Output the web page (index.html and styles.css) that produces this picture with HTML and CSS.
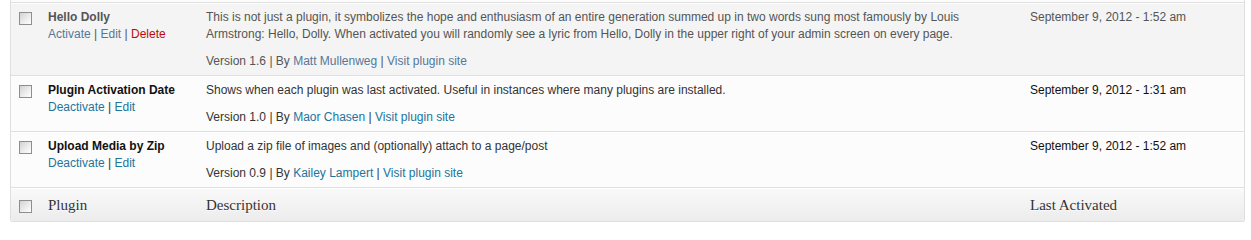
FILE: index.html
```html
<!DOCTYPE html>
<html>
<head>
<meta charset="utf-8">
<link rel="stylesheet" href="styles.css">
</head>
<body>
<div class="plugins">
  <div class="prev"></div>

  <div class="row inactive">
    <div class="cell check"><span class="cb"></span></div>
    <div class="cell name">
      <strong class="title">Hello Dolly</strong>
      <div class="actions"><a href="#">Activate</a> | <a href="#">Edit</a> | <a href="#" class="delete">Delete</a></div>
    </div>
    <div class="cell desc">
      <p class="text">This is not just a plugin, it symbolizes the hope and enthusiasm of an entire generation summed up in two words sung most famously by Louis Armstrong: Hello, Dolly. When activated you will randomly see a lyric from Hello, Dolly in the upper right of your admin screen on every page.</p>
      <p class="meta">Version 1.6 | By <a href="#">Matt Mullenweg</a> | <a href="#">Visit plugin site</a></p>
    </div>
    <div class="cell date">September 9, 2012 - 1:52 am</div>
  </div>

  <div class="row active">
    <div class="cell check"><span class="cb"></span></div>
    <div class="cell name">
      <strong class="title">Plugin Activation Date</strong>
      <div class="actions"><a href="#">Deactivate</a> | <a href="#">Edit</a></div>
    </div>
    <div class="cell desc">
      <p class="text">Shows when each plugin was last activated. Useful in instances where many plugins are installed.</p>
      <p class="meta">Version 1.0 | By <a href="#">Maor Chasen</a> | <a href="#">Visit plugin site</a></p>
    </div>
    <div class="cell date">September 9, 2012 - 1:31 am</div>
  </div>

  <div class="row active">
    <div class="cell check"><span class="cb"></span></div>
    <div class="cell name">
      <strong class="title">Upload Media by Zip</strong>
      <div class="actions"><a href="#">Deactivate</a> | <a href="#">Edit</a></div>
    </div>
    <div class="cell desc">
      <p class="text">Upload a zip file of images and (optionally) attach to a page/post</p>
      <p class="meta">Version 0.9 | By <a href="#">Kailey Lampert</a> | <a href="#">Visit plugin site</a></p>
    </div>
    <div class="cell date">September 9, 2012 - 1:52 am</div>
  </div>

  <div class="row foot">
    <div class="cell check"><span class="cb"></span></div>
    <div class="cell">Plugin</div>
    <div class="cell">Description</div>
    <div class="cell">Last Activated</div>
  </div>
</div>
</body>
</html>
```

FILE: styles.css
```css
html, body {
  margin: 0;
  padding: 0;
  background: #ffffff;
}

body {
  font-family: "Liberation Sans", Arial, sans-serif;
  font-size: 12px;
  color: #333;
}

.plugins {
  margin-left: 10px;
  width: 1235px;
  box-sizing: border-box;
  border-left: 1px solid #dfdfdf;
  border-right: 1px solid #dfdfdf;
  border-bottom: 1px solid #dfdfdf;
  border-radius: 0 0 3px 3px;
  box-shadow: 0 1px 1px rgba(0, 0, 0, 0.06);
}

.prev {
  height: 2px;
  background: #fcfcfc;
  border-bottom: 1px solid #dfdfdf;
}

.row {
  display: grid;
  grid-template-columns: 30px 158px 1fr 221px;
  border-top: 1px solid #ffffff;
  border-bottom: 1px solid #dfdfdf;
}

.cell {
  padding: 5px 7px 5px;
  line-height: 17px;
}

.check {
  padding: 8px 0 0 8px;
}

.cb {
  display: block;
  width: 11px;
  height: 11px;
  border: 1px solid #8e8e8e;
  background: linear-gradient(135deg, #d2d2d2 0%, #ececec 55%, #ffffff 100%);
}

.title {
  display: block;
  font-weight: bold;
}

.actions a,
.meta a {
  color: #21759b;
  text-decoration: none;
}

.text {
  margin: 0 0 10px;
}

.meta {
  margin: 0;
}

.active {
  background: #fcfcfc;
  color: #333;
}

.active .title {
  color: #111;
}

.active .date {
  color: #111;
}

.inactive {
  background: #f4f4f4;
  color: #555;
}

.inactive .title {
  color: #555;
}

.inactive .actions a,
.inactive .meta a {
  color: #557799;
}

.inactive .actions a.delete {
  color: #bc0b0b;
}

.foot {
  border-bottom: none;
  background: linear-gradient(to bottom, #f9f9f9, #ececec);
  border-radius: 0 0 3px 3px;
}

.foot .cell {
  padding: 7px 7px 6px;
  line-height: 19px;
  font-family: "Liberation Serif", Georgia, serif;
  font-size: 15px;
  color: #333;
  text-shadow: 0 1px 0 rgba(255, 255, 255, 0.8);
}

.foot .check {
  padding: 11px 0 0 8px;
}
```
